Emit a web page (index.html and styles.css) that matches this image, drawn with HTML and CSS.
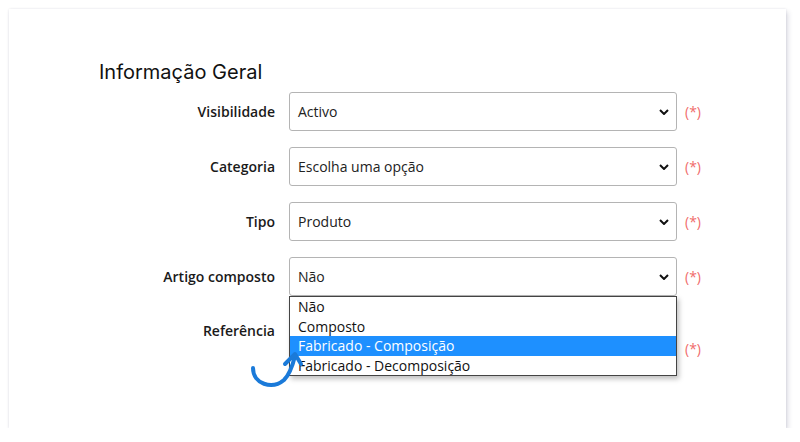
FILE: index.html
```html
<!DOCTYPE html>
<html lang="pt">
<head>
  <meta charset="UTF-8">
  <title>Informação Geral</title>
  <link rel="stylesheet" href="styles.css">
</head>
<body>

<div class="card">
  <h2 class="section-title">Informação Geral</h2>

  <div class="form-grid">
    <label class="field-label">Visibilidade</label>
    <div class="fake-select">
      <span>Activo</span>
      <svg class="chev" width="10" height="6" viewBox="0 0 10 6"><polyline points="1,1 5,5 9,1" fill="none" stroke="#111" stroke-width="2"/></svg>
    </div>
    <span class="req">(*)</span>

    <label class="field-label">Categoria</label>
    <div class="fake-select">
      <span>Escolha uma opção</span>
      <svg class="chev" width="10" height="6" viewBox="0 0 10 6"><polyline points="1,1 5,5 9,1" fill="none" stroke="#111" stroke-width="2"/></svg>
    </div>
    <span class="req">(*)</span>

    <label class="field-label">Tipo</label>
    <div class="fake-select">
      <span>Produto</span>
      <svg class="chev" width="10" height="6" viewBox="0 0 10 6"><polyline points="1,1 5,5 9,1" fill="none" stroke="#111" stroke-width="2"/></svg>
    </div>
    <span class="req">(*)</span>

    <label class="field-label">Artigo composto</label>
    <div class="fake-select open">
      <span>Não</span>
      <svg class="chev" width="10" height="6" viewBox="0 0 10 6"><polyline points="1,1 5,5 9,1" fill="none" stroke="#111" stroke-width="2"/></svg>
      <ul class="options">
        <li>Não</li>
        <li>Composto</li>
        <li class="active">Fabricado - Composição</li>
        <li>Fabricado - Decomposição</li>
      </ul>
    </div>
    <span class="req">(*)</span>

    <label class="field-label label-top">Referência</label>
    <div class="ref-box"></div>
    <span class="req req-low">(*)</span>
  </div>

  <svg class="hint-arrow" width="60" height="52" viewBox="0 0 60 52">
    <path d="M3 28 C 3 44, 22 50, 34 40 C 40 34, 43 24, 45 16" fill="none" stroke="#1a7ad9" stroke-width="4" stroke-linecap="round"/>
    <polyline points="35,24 45,14 51,24" fill="none" stroke="#1a7ad9" stroke-width="4" stroke-linecap="round" stroke-linejoin="round"/>
  </svg>
</div>

</body>
</html>
```

FILE: styles.css
```css
body {
  margin: 0;
  background: #fff;
  font-family: "Open Sans", sans-serif;
  color: #222;
}

.card {
  position: relative;
  margin: 9px 0 0 9px;
  width: 777px;
  height: 419px;
  box-sizing: border-box;
  padding: 50px 0 0 90px;
  background: #fff;
  box-shadow: 0 0 2px rgba(40, 40, 90, 0.12), 2px 3px 5px rgba(40, 40, 90, 0.16);
}

.section-title {
  margin: 0 0 7px;
  font-family: "Inter", sans-serif;
  font-weight: 400;
  font-size: 20px;
  line-height: 26px;
  color: #111;
}

.form-grid {
  display: grid;
  grid-template-columns: 190px 388px auto;
  grid-auto-rows: 39px;
  row-gap: 16px;
  align-items: center;
}

.field-label {
  text-align: right;
  padding-right: 14px;
  font-weight: 600;
  font-size: 14px;
  color: #1a1a1a;
}

.label-top {
  align-self: start;
  line-height: 38px;
}

.fake-select {
  position: relative;
  height: 39px;
  box-sizing: border-box;
  border: 1px solid #b4b4b4;
  border-radius: 3px;
  display: flex;
  align-items: center;
  justify-content: space-between;
  padding: 0 5px 0 8px;
  font-size: 14px;
  color: #222;
}

.chev {
  margin-right: 2px;
}

.req {
  margin-left: 8px;
  font-size: 14px;
  color: #f06b6b;
}

.req-low {
  align-self: start;
  margin-top: 27px;
}

.ref-box {
  align-self: start;
  height: 60px;
}

.options {
  position: absolute;
  left: -1px;
  right: -1px;
  top: 38px;
  margin: 0;
  padding: 0;
  list-style: none;
  background: #fff;
  border: 1px solid #444;
  box-shadow: 2px 3px 5px rgba(0, 0, 0, 0.25);
  z-index: 5;
}

.options li {
  height: 19.5px;
  line-height: 19.5px;
  padding-left: 8px;
  font-size: 14px;
  color: #111;
}

.options li.active {
  background: #1e90ff;
  color: #fff;
}

.hint-arrow {
  position: absolute;
  left: 241px;
  top: 331px;
  z-index: 6;
}
```
